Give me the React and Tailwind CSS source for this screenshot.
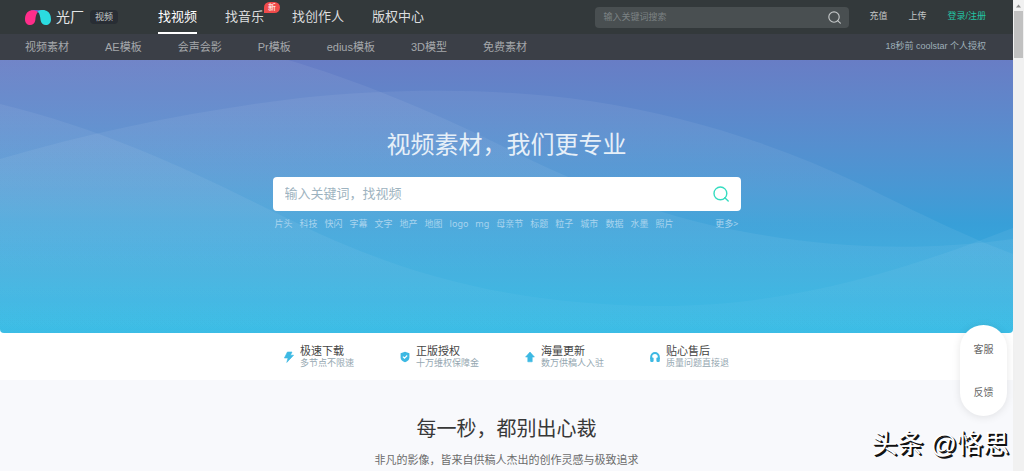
import clsx from "clsx";

const mainNav = [
  { label: "找视频", active: true },
  { label: "找音乐", badge: "新" },
  { label: "找创作人" },
  { label: "版权中心" },
];

const subNav = ["视频素材", "AE模板", "会声会影", "Pr模板", "edius模板", "3D模型", "免费素材"];

const hotTags = [
  "片头", "科技", "快闪", "字幕", "文字", "地产", "地图", "logo",
  "mg", "母亲节", "标题", "粒子", "城市", "数据", "水墨", "照片",
];

const features = [
  { icon: BoltIcon, title: "极速下载", desc: "多节点不限速" },
  { icon: ShieldIcon, title: "正版授权", desc: "十万维权保障金" },
  { icon: ArrowIcon, title: "海量更新", desc: "数万供稿人入驻" },
  { icon: HeadsetIcon, title: "贴心售后", desc: "质量问题直接退" },
];

function Logo() {
  return (
    <svg viewBox="0 0 26 15" className="h-[15px] w-[26px]" aria-hidden="true">
      <path d="M6 0.3C9 -0.1 17 -0.1 20 0.3L17 5C15 3 13.8 2.2 12.8 2.2C11.8 2.6 11 4 10.6 6Z" fill="#6a5fc4" />
      <path d="M5.5 0.4C8.4 -0.2 10.8 0.2 12.6 2C11 4 10.6 7 10.3 10.2C10 13.4 7.6 15 5.2 15C2.2 15 0 12.6 0 9.4C0 5 1.8 1.3 5.5 0.4Z" fill="#ff2d8a" />
      <path d="M20.5 0.4C17.6 -0.2 15.4 0 12.8 1.4C14.8 3.4 15.2 7 15.6 10.2C16 13.4 18.2 15 20.8 15C23.8 15 26 12.6 26 9.4C26 5 24.2 1.3 20.5 0.4Z" fill="#2bdbe0" />
    </svg>
  );
}

function SearchIcon({ className }) {
  return (
    <svg viewBox="0 0 16 16" className={className} fill="none" stroke="currentColor" strokeWidth="1.4" aria-hidden="true">
      <circle cx="7.4" cy="7.4" r="6.4" />
      <path d="M11.8 11.8L15.2 15" strokeLinecap="round" />
    </svg>
  );
}

function BoltIcon() {
  return (
    <svg viewBox="0 0 10 12" className="h-3 w-2.5" fill="#3db9e3" aria-hidden="true">
      <path d="M3.4 1H8L6.4 4.2H9.6L2.8 11.4L4 7H0.4Z" stroke="#3db9e3" strokeWidth="0.6" strokeLinejoin="round" />
    </svg>
  );
}

function ShieldIcon() {
  return (
    <svg viewBox="0 0 10 12" className="h-3 w-2.5" aria-hidden="true">
      <path d="M5 0.8L9.4 2.2V6.6C9.4 9 7.4 10.5 5 11.3C2.6 10.5 0.6 9 0.6 6.6V2.2Z" fill="#3db9e3" />
      <path d="M2.9 5.6L4.5 7.2L7.2 4.5" fill="none" stroke="#fff" strokeWidth="1.1" />
    </svg>
  );
}

function ArrowIcon() {
  return (
    <svg viewBox="0 0 10 12" className="h-3 w-2.5" fill="#3db9e3" aria-hidden="true">
      <path d="M5 1L9.4 6H7.2V10.8H2.8V6H0.6Z" stroke="#3db9e3" strokeWidth="0.6" strokeLinejoin="round" />
    </svg>
  );
}

function HeadsetIcon() {
  return (
    <svg viewBox="0 0 10 12" className="h-3 w-2.5" aria-hidden="true">
      <path d="M1.2 8V5.8A3.8 3.8 0 0 1 8.8 5.8V8" fill="none" stroke="#3db9e3" strokeWidth="2" />
      <rect x="0.2" y="6.4" width="3.4" height="4.6" rx="1.2" fill="#3db9e3" />
      <rect x="6.4" y="6.4" width="3.4" height="4.6" rx="1.2" fill="#3db9e3" />
    </svg>
  );
}

function HeroWaves() {
  return (
    <svg viewBox="0 0 1013 273" preserveAspectRatio="none" className="absolute inset-0 h-full w-full" aria-hidden="true">
      <defs>
        <linearGradient id="wave" gradientUnits="userSpaceOnUse" x1="0" y1="0" x2="0" y2="273">
          <stop offset="0" stopColor="#fff" stopOpacity="0.06" />
          <stop offset="0.6" stopColor="#fff" stopOpacity="0.06" />
          <stop offset="1" stopColor="#fff" stopOpacity="0.02" />
        </linearGradient>
      </defs>
      <g fill="url(#wave)">
        <path d="M0 0H288C350 18 430 50 500 85C570 120 650 155 745 172C830 188 920 192 1013 179V273H0Z" />
        <path d="M0 44C100 68 190 110 270 150C370 200 480 245 660 246C790 246 900 212 1013 168V273H0Z" />
        <path d="M0 99C100 70 200 50 300 38C400 28 500 28 590 41C690 56 780 86 860 124C920 154 965 176 1013 194V273H0Z" />
      </g>
    </svg>
  );
}

function Header() {
  return (
    <header className="text-[#c4c7c8]">
      <div className="flex h-[34px] items-center bg-[#33393b] pl-[25px] pr-[27px]">
        <a href="#" className="flex items-center">
          <Logo />
          <span className="ml-[5px] text-sm leading-4 text-[#e4e6e6]">光厂</span>
          <span className="ml-[6px] rounded-sm bg-[#282d34] px-[5px] text-[9px] leading-[14px]">视频</span>
        </a>
        <nav className="ml-10 flex h-full gap-7">
          {mainNav.map((item) => (
            <a
              key={item.label}
              href="#"
              className={clsx(
                "relative flex h-full items-center border-b-2 pt-0.5 text-[13px]",
                item.active ? "border-white text-white" : "border-transparent text-[#dcdedf]"
              )}
            >
              {item.label}
              {item.badge && (
                <span className="absolute left-full top-[2px] rounded-md rounded-bl-none bg-[#f04b4b] px-1 text-[8px] leading-[11px] text-white">
                  {item.badge}
                </span>
              )}
            </a>
          ))}
        </nav>
        <form className="ml-auto flex h-[21px] w-[254px] items-center rounded bg-[#494f51] px-2" onSubmit={(e) => e.preventDefault()}>
          <input
            type="text"
            aria-label="搜索"
            placeholder="输入关键词搜索"
            className="h-full min-w-0 flex-1 bg-transparent text-[9px] outline-none placeholder:text-[#7c8284]"
          />
          <button type="submit" aria-label="搜索">
            <SearchIcon className="h-[13px] w-[13px]" />
          </button>
        </form>
        <div className="ml-5 flex gap-[21px] whitespace-nowrap text-[9px]">
          <a href="#">充值</a>
          <a href="#">上传</a>
          <a href="#" className="text-[#23c4a4]">登录/注册</a>
        </div>
      </div>
      <div className="flex h-[26px] items-center justify-between bg-[#3b3f47] pl-[25px] pr-[27px]">
        <nav className="flex gap-9 text-[11px] text-[#a5a8ab]">
          {subNav.map((label) => (
            <a key={label} href="#">{label}</a>
          ))}
        </nav>
        <p className="text-[9px] text-[#9fb0b9]">18秒前 coolstar 个人授权</p>
      </div>
    </header>
  );
}

function Hero() {
  return (
    <section className="relative h-[273px] overflow-hidden rounded-b bg-linear-to-b from-[#687dc5] via-[#389fd8] via-60% to-[#30bae4]">
      <HeroWaves />
      <div className="relative mx-auto max-w-[468px] pt-[68px]">
        <h1 className="text-center text-2xl leading-[34px] text-[#e6eff8]">视频素材，我们更专业</h1>
        <form className="mt-[15px] flex h-[34px] items-center rounded bg-white px-3" onSubmit={(e) => e.preventDefault()}>
          <input
            type="text"
            aria-label="找视频"
            placeholder="输入关键词，找视频"
            className="min-w-0 flex-1 text-[13px] outline-none placeholder:text-[#9db3c0]"
          />
          <button type="submit" aria-label="搜索" className="text-[#35dcc0]">
            <SearchIcon className="h-4 w-4" />
          </button>
        </form>
        <div className="mt-[7px] flex justify-between px-[2px] font-['Noto_Sans','Noto_Sans_CJK_SC',sans-serif] text-[9px] leading-3 text-[#a9d4ee]">
          <div className="flex gap-[7px]">
            {hotTags.map((tag) => (
              <a key={tag} href="#">{tag}</a>
            ))}
          </div>
          <a href="#">更多&gt;</a>
        </div>
      </div>
    </section>
  );
}

function Features() {
  return (
    <section className="flex h-[47px] items-center justify-center gap-[46px] bg-white pt-px">
      {features.map(({ icon: Icon, title, desc }) => (
        <div key={title} className="flex items-center gap-[6px]">
          <Icon />
          <div>
            <h3 className="text-[11px] leading-[13px] text-[#444]">{title}</h3>
            <p className="text-[9px] leading-[11px] text-[#95a7b1]">{desc}</p>
          </div>
        </div>
      ))}
    </section>
  );
}

function Scrollbar() {
  return (
    <div className="flex w-[11px] shrink-0 flex-col items-center bg-[#f1f1f1]">
      <svg viewBox="0 0 11 11" className="h-[11px] w-[11px]" aria-hidden="true">
        <path d="M5.5 4.5L8 7.5H3Z" fill="#8a8a8a" />
      </svg>
      <div className="h-[47px] w-[9px] bg-[#c1c1c1]" />
    </div>
  );
}

export default function App() {
  return (
    <div className="flex min-h-screen font-['Liberation_Sans','Noto_Sans_CJK_SC',sans-serif]">
      <div className="relative flex min-w-0 flex-1 flex-col bg-white">
        <Header />
        <Hero />
        <Features />
        <section className="flex-1 bg-[#f8f9fc] pt-[34px] text-center">
          <h2 className="text-xl leading-[30px] text-[#383838]">每一秒，都别出心裁</h2>
          <p className="mt-2 text-[11px] leading-4 text-[#6b6b6b]">
            非凡的影像，皆来自供稿人杰出的创作灵感与极致追求
          </p>
        </section>

        <aside className="absolute right-[6px] top-[325px] flex h-[91px] w-[47px] flex-col items-center justify-between rounded-full bg-white pb-4 pt-[18px] text-[10px] leading-[14px] text-[#666] shadow-[0_1px_8px_rgba(0,0,0,0.1)]">
          <button type="button">客服</button>
          <button type="button">反馈</button>
        </aside>
        <p className="absolute bottom-[9px] right-[4px] text-[26px] leading-9 text-white [text-shadow:1px_1px_0_#111,2px_2px_0_#111]">
          头条 @恪思
        </p>
      </div>
      <Scrollbar />
    </div>
  );
}
